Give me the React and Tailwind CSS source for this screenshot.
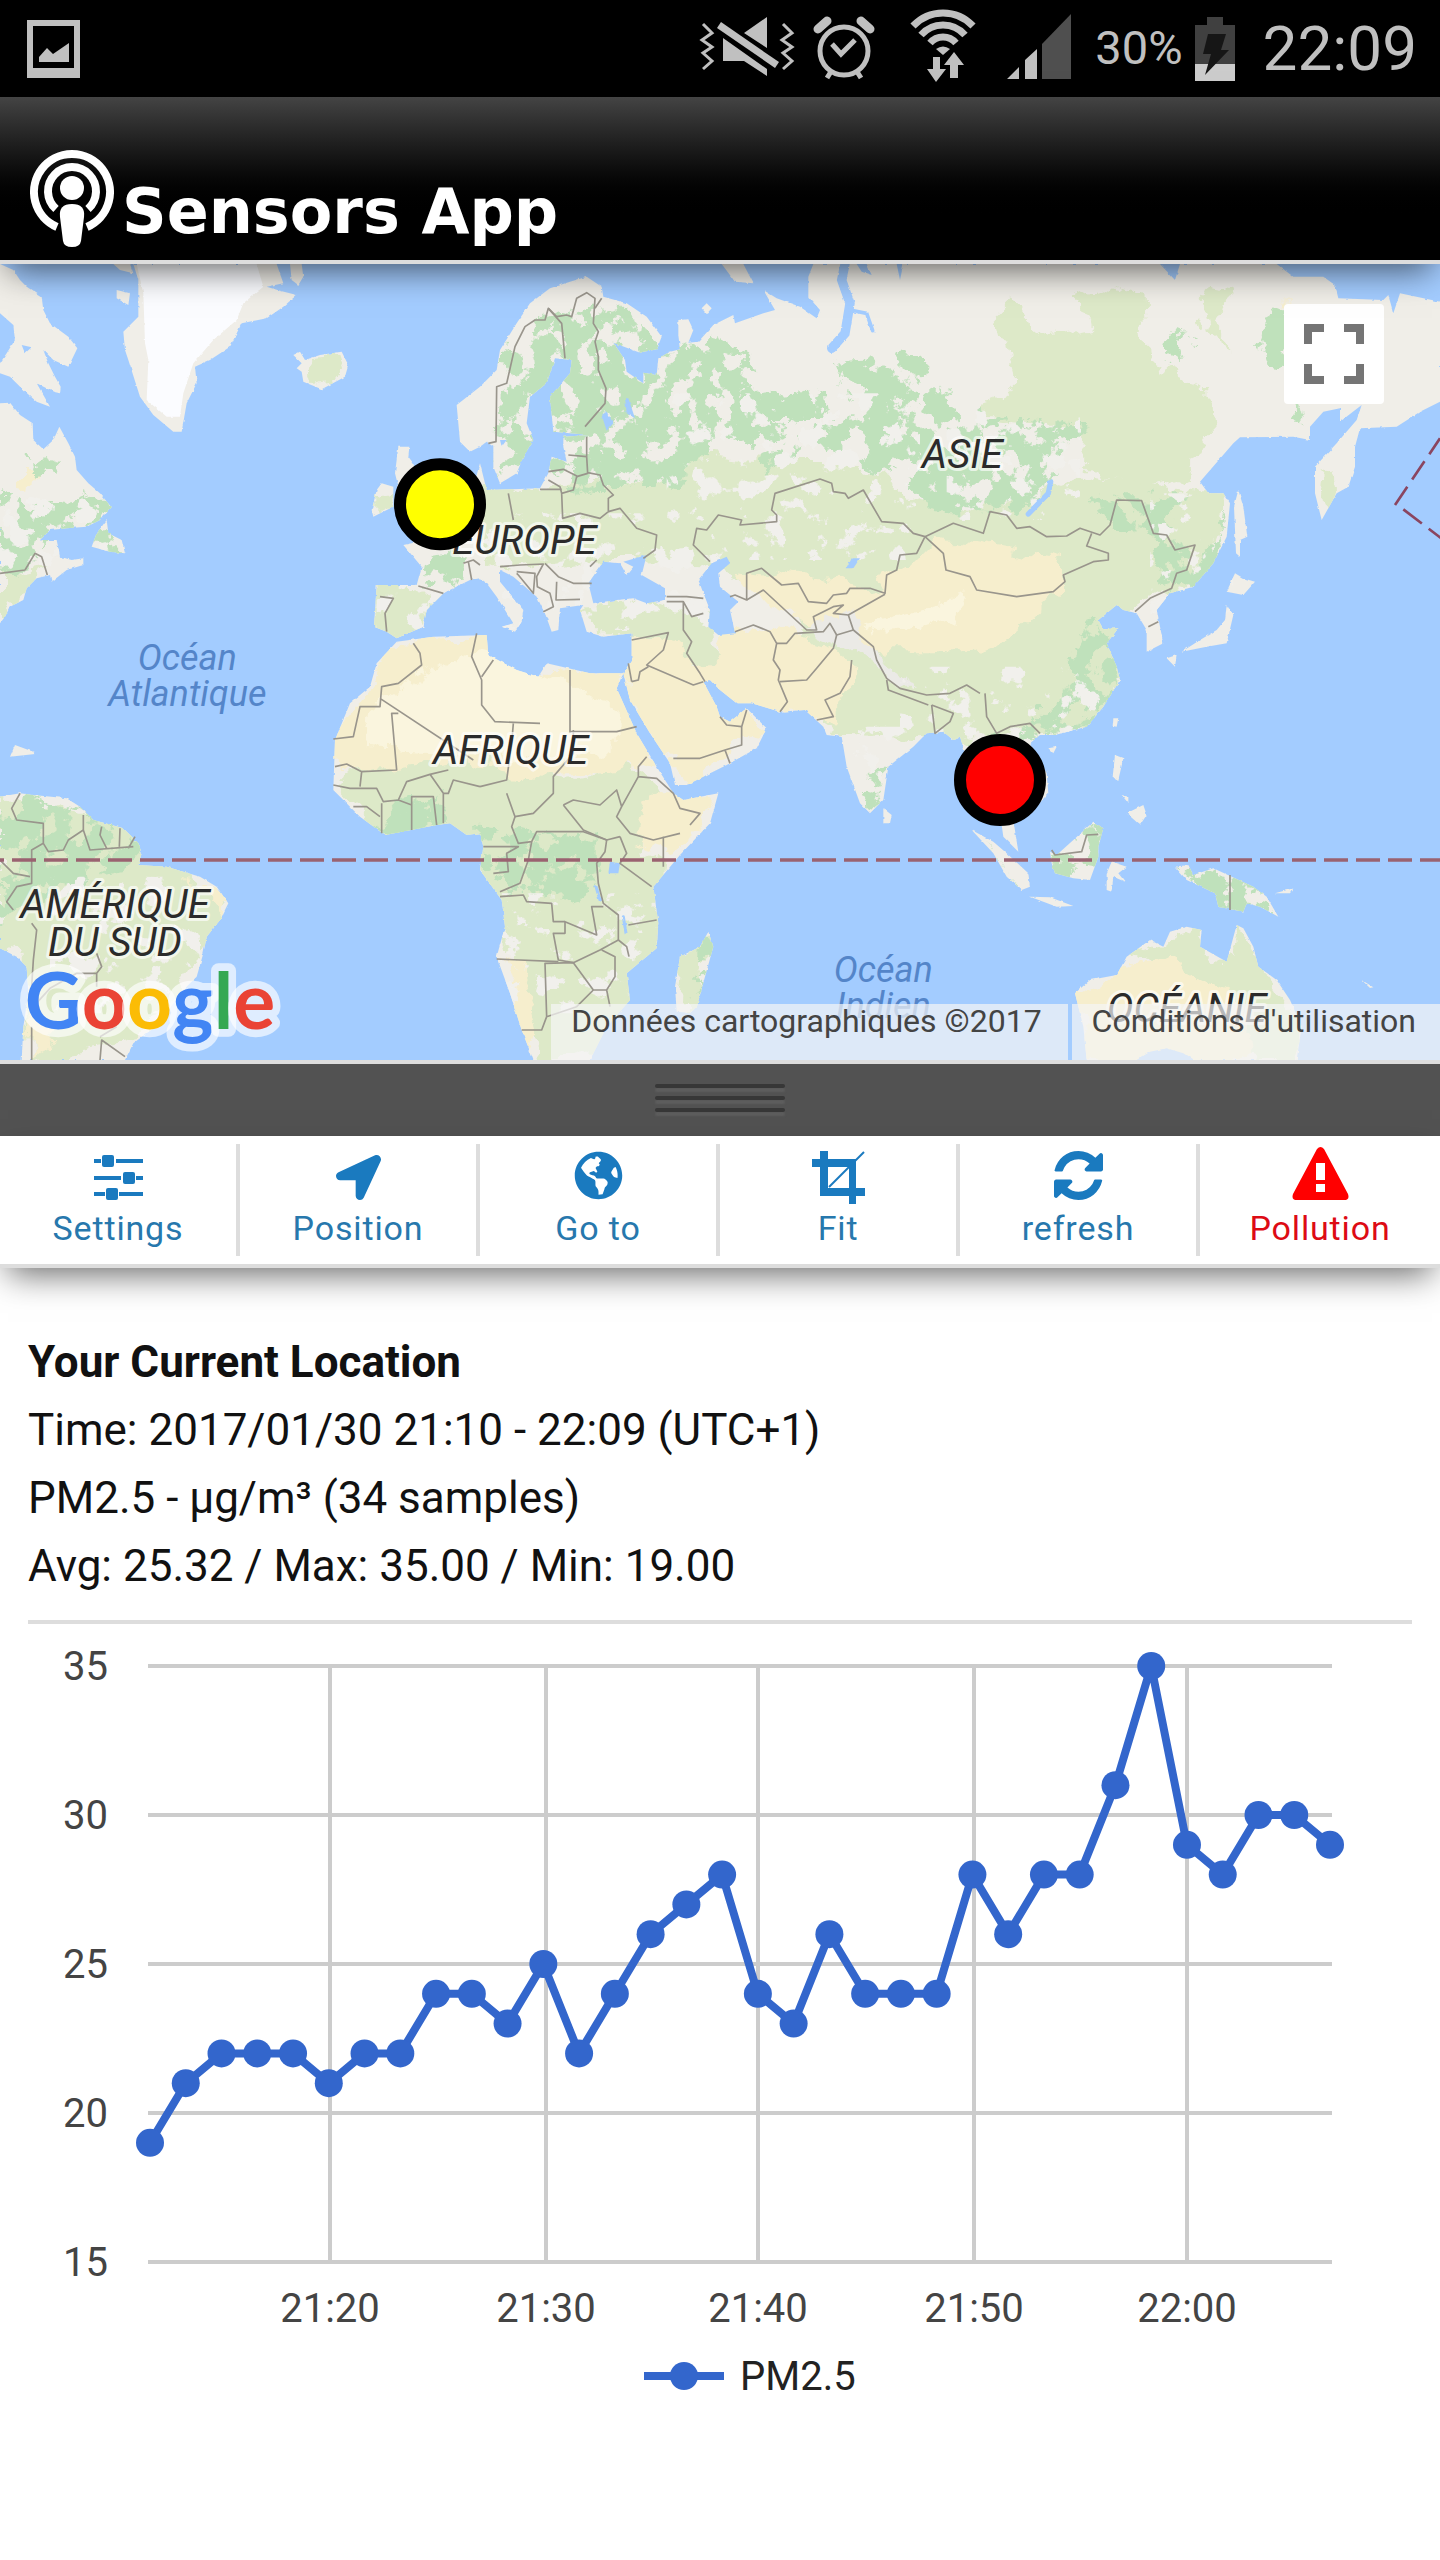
import React from "react";
import { FaLocationArrow, FaGlobeAmericas } from "react-icons/fa";

const WATER = "#a3ccff";

const ISLANDS = [
  "M0,12 40,30 60,60 80,80 125,110 130,150 150,190 205,230 232,265 215,300 205,320 160,300 130,270 145,310 165,350 182,380 180,400 160,395 110,370 150,440 110,425 70,390 30,350 0,340Z",
  "M0,430 30,428 60,465 98,490 100,540 130,568 160,540 178,500 205,550 225,590 230,630 265,670 300,700 333,740 300,780 260,800 200,805 150,810 120,840 170,840 180,890 215,900 250,895 250,915 200,930 155,965 150,945 110,955 80,985 70,1020 30,1040 15,1070 0,1090Z",
  "M320,780 325,820 365,840 375,880 330,875 275,860 290,820Z",
  "M400,12 415,60 415,170 370,215 375,270 385,300 420,410 460,465 520,515 545,515 560,430 590,370 585,320 630,300 690,260 725,190 800,175 850,140 890,105 840,92 800,80 850,70 830,12Z",
  "M350,90 390,100 385,135 350,115Z",
  "M870,12 905,12 910,50 895,75 875,60Z",
  "M340,12 390,12 400,40 360,30Z",
  "M905,310 880,285 900,275 915,300 960,285 1025,275 1045,315 1035,350 965,388 910,365 905,335 890,325Z",
  "M1195,560 1228,560 1225,590 1240,610 1260,700 1250,780 1190,760 1195,680 1185,640Z",
  "M1145,670 1180,680 1180,740 1120,770 1115,750 1130,690Z",
  "M2165,12 2230,12 2260,70 2205,65Z",
  "M2105,145 2120,130 2135,145 2120,162Z",
  "M2125,2015 2140,2060 2090,2240 2070,2260 2030,2255 2025,2180 2040,2090 2100,2060Z",
  "M0,1610 60,1600 100,1605 200,1615 240,1640 280,1680 370,1705 415,1750 425,1780 415,1815 500,1820 600,1850 650,1880 685,1930 660,1980 620,2030 610,2080 590,2150 540,2200 480,2290 400,2350 375,2400 65,2400 70,2300 85,2200 80,2120 50,2090 0,2065Z",
  "M30,1490 45,1455 100,1475 105,1482Z",
  "M2650,1645 2675,1665 2670,1690 2650,1690Z",
  "M2915,1710 2980,1745 3020,1780 3085,1840 3090,1880 3065,1890 3020,1850 2980,1780Z",
  "M3090,1910 3150,1912 3220,1938 3170,1940Z",
  "M3150,1775 3170,1785 3220,1740 3280,1685 3310,1705 3295,1760 3295,1790 3270,1860 3220,1855 3165,1840 3155,1810Z",
  "M3320,1840 3335,1805 3380,1820 3355,1840 3375,1865 3340,1850 3335,1895 3320,1890Z",
  "M3525,1820 3565,1815 3580,1845 3640,1825 3760,1880 3800,1910 3835,1970 3780,1940 3740,1930 3730,1955 3655,1940 3645,1900 3560,1860Z",
  "M3825,1900 3880,1885 3870,1900Z",
  "M3345,1485 3370,1495 3355,1560 3338,1550Z",
  "M3380,1660 3430,1635 3440,1665 3420,1695Z",
  "M3365,1605 3385,1610 3385,1630Z",
  "M3340,1375 3355,1375 3350,1400 3338,1398Z",
  "M3145,1465 3170,1460 3160,1480Z",
  "M3680,1035 3700,1065 3680,1150 3620,1160 3545,1175 3600,1140 3650,1110 3675,1080Z",
  "M3500,1195 3530,1185 3525,1220Z",
  "M3680,995 3705,940 3730,955 3765,965 3730,1005Z",
  "M3715,690 3730,740 3742,830 3720,840 3720,890 3708,880 3702,740Z",
  "M3225,2200 3270,2160 3350,2145 3380,2090 3450,2040 3490,2060 3510,2015 3560,2000 3605,2010 3600,2060 3680,2105 3710,1995 3730,2005 3760,2060 3775,2120 3830,2160 3870,2220 3905,2300 3890,2400 3260,2400 3250,2300Z",
  "M4085,2160 4120,2182 4110,2184Z",
];

const EURASIA =
  "M1440,380 1490,330 1500,270 1550,190 1590,130 1650,85 1710,65 1760,50 1805,80 1810,110 1880,130 1940,170 1985,230 1970,268 1920,278 1840,248 1875,300 1880,335 1930,370 1930,338 1970,345 1975,295 2010,275 2040,268 2035,225 2035,180 2065,178 2080,210 2065,248 2095,245 2140,195 2200,165 2205,190 2290,160 2325,150 2290,90 2330,115 2400,140 2450,175 2460,150 2425,110 2425,50 2440,12 3480,12 3525,60 3540,12 3830,12 3880,50 3970,50 4005,75 4015,115 4150,120 4165,105 4180,160 4200,100 4320,125 4320,425 4260,455 4190,500 4080,505 4065,560 4065,620 4045,680 4010,700 3965,780 3945,700 3945,620 4010,550 4070,480 4085,435 4020,485 4020,445 3970,455 3930,500 3930,540 3880,530 3720,532 3700,550 3600,665 3625,700 3670,700 3690,730 3680,830 3640,910 3580,980 3510,1000 3470,1050 3490,1150 3440,1175 3440,1110 3410,1060 3370,1050 3350,1035 3295,1080 3310,1108 3355,1105 3320,1150 3350,1220 3360,1260 3310,1340 3260,1400 3165,1425 3120,1425 3090,1450 3140,1540 3145,1600 3100,1650 3040,1680 3055,1775 3010,1730 3000,1660 2920,1560 2880,1430 2860,1440 2830,1415 2780,1420 2740,1460 2665,1520 2650,1620 2610,1660 2580,1630 2540,1520 2525,1430 2480,1425 2470,1400 2415,1350 2340,1355 2255,1330 2210,1330 2160,1290 2130,1260 2110,1265 2150,1340 2160,1370 2190,1385 2240,1345 2300,1405 2270,1465 2180,1515 2060,1575 2025,1575 2010,1510 1950,1420 1890,1320 1870,1240 1895,1200 1895,1120 1810,1130 1760,1115 1740,1050 1750,1035 1680,1045 1675,1110 1655,1115 1635,1060 1610,1010 1540,950 1500,930 1500,965 1570,1050 1565,1085 1545,1115 1505,1100 1540,1090 1490,1010 1460,970 1440,955 1410,960 1380,975 1330,1000 1280,1050 1270,1100 1190,1135 1160,1115 1122,1100 1130,975 1250,975 1265,920 1210,855 1280,840 1300,800 1420,680 1440,610 1460,690 1620,685 1645,640 1655,590 1700,605 1690,560 1690,530 1770,525 1660,515 1650,410 1710,340 1715,300 1665,295 1640,370 1590,410 1580,490 1600,540 1570,590 1550,640 1500,670 1480,620 1480,560 1460,545 1440,560 1410,575 1380,545 1370,435Z";

const AFRICA =
  "M1190,1145 1300,1130 1460,1125 1465,1185 1550,1230 1615,1250 1640,1210 1770,1240 1870,1240 1850,1285 1910,1420 1970,1520 2020,1600 2050,1620 2155,1600 2130,1690 2040,1785 1960,1880 1975,1990 1970,2065 1880,2140 1890,2220 1820,2300 1770,2400 1600,2400 1565,2310 1530,2200 1490,2090 1515,2000 1505,1920 1440,1830 1450,1760 1440,1720 1400,1725 1350,1690 1310,1695 1155,1725 1080,1670 1000,1590 1005,1440 1050,1330 1110,1280 1130,1210Z";

const LAKES = [
  "M0,160 40,195 45,240 20,280 0,310Z",
  "M65,255 95,262 75,280Z",
  "M1765,970 1810,905 1860,910 1880,945 1900,920 1870,905 1940,885 1925,945 1995,985 1995,1020 1940,1030 1900,1015 1850,1020 1780,1030Z",
  "M2135,910 2180,890 2190,910 2155,940 2160,980 2215,1025 2190,1050 2205,1120 2155,1125 2125,1100 2130,1050 2095,960Z",
  "M2540,925 2555,895 2580,895 2560,925Z",
  "M1805,465 1820,455 1840,490 1820,512Z",
  "M1875,415 1885,415 1905,475 1880,460Z",
  "M1500,540 1520,540 1505,560Z",
  "M1830,1805 1860,1810 1855,1840 1825,1840Z",
  "M3410,2400 3450,2375 3500,2365 3550,2380 3580,2400Z",
  "M2570,12 2600,12 2615,45 2585,35Z",
  "M2690,12 2710,12 2700,60Z",
];

const GREEN = [
  "M1480,650 1490,400 1560,290 1640,190 1750,150 1820,140 1900,140 1960,260 2010,285 2100,250 2150,210 2180,250 2250,280 2290,400 2480,390 2490,480 2300,480 2350,580 2310,640 2250,560 2150,520 2100,640 2000,690 1770,690 1690,680 1640,600Z",
  "M2500,300 2760,290 2800,380 2870,420 2930,470 3210,490 3250,500 3200,580 3130,700 3050,760 2800,760 2700,640 2600,620 2440,520 2580,480Z",
  "M1500,300 1640,180 1700,300 1600,420 1500,560Z",
  "M2280,460 2400,540 2340,620 2300,560Z",
  "M2850,700 2900,660 2940,740 2910,770Z",
  "M3260,740 3380,700 3560,700 3500,780 3600,900 3690,760 3620,950 3500,1000 3460,850 3300,770Z",
  "M3080,1400 3150,1330 3330,1150 3370,1260 3260,1400 3120,1430 3100,1600 3000,1560 2900,1440Z",
  "M3200,1180 3280,1080 3340,1150 3320,1240 3240,1280Z",
  "M0,1600 250,1640 400,1740 400,1810 300,1830 200,1900 50,1950 0,2000Z",
  "M1440,1700 1600,1715 1790,1730 1790,1850 1740,1930 1640,1900 1540,1880 1450,1830Z",
  "M0,700 100,740 300,690 330,750 250,800 150,830 60,960 0,930Z",
  "M90,590 180,600 170,660 110,640Z",
  "M3490,260 3530,200 3590,240 3530,320Z",
  "M3770,200 3850,150 3860,330 3800,290Z",
  "M2570,1580 2650,1500 2650,1620 2610,1660Z",
  "M3140,1775 3280,1680 3310,1710 3290,1830 3165,1850Z",
  "M3520,1810 3760,1870 3840,1970 3780,1950 3660,1950Z",
  "M2960,1750 3040,1860 3060,1880 3000,1810Z",
  "M275,870 310,780 380,880Z",
  "M1280,890 1390,880 1380,960 1270,970Z",
  "M1140,1700 1200,1630 1320,1600 1360,1700 1160,1730Z",
  "M2090,2100 2130,2000 2150,2060 2080,2240Z",
  "M3860,410 3940,430 3900,500Z",
  "M3960,200 3990,120 3960,340Z",
];

const LIGHT = [
  "M1440,690 2000,660 2100,580 2300,600 2550,600 2750,700 2950,760 3280,640 3600,700 3690,700 3600,950 3400,1060 3350,1220 3330,1400 2900,1430 2860,1440 2500,1430 2440,1280 2400,1100 2300,980 2160,930 1900,900 1800,900 1440,930Z",
  "M2990,170 3020,140 3100,180 3130,230 3280,200 3230,110 3300,80 3430,110 3440,300 3620,380 3630,520 3560,650 3450,680 3300,640 3150,480 2960,470 3040,350Z",
  "M1120,975 1330,1000 1270,1110 1130,1110Z",
  "M1745,1040 1900,1030 2120,1060 2150,1200 2060,1240 1990,1120 1800,1120Z",
  "M1000,1560 1100,1520 1400,1500 1700,1560 1900,1520 2010,1620 1930,1760 2000,1800 1970,2080 1880,2300 1700,2400 1620,2400 1560,2200 1500,2000 1440,1800 1440,1720 1155,1725Z",
  "M0,1600 400,1700 680,1930 600,2100 400,2350 80,2400 80,2100 0,2060Z",
  "M2040,2090 2140,2020 2090,2250 2030,2250Z",
  "M3380,2080 3600,2000 3620,2090 3700,2100 3720,2000 3770,2100 3900,2300 3880,2400 3760,2400 3600,2150Z",
  "M3590,120 3620,80 3700,100 3640,200 3700,260 3620,230Z",
  "M0,950 130,920 60,1010 0,1060Z",
  "M1120,700 1180,690 1180,740 1120,770Z",
  "M920,300 1000,290 1020,350 940,360Z",
  "M3960,620 4010,640 3980,760 3950,700Z",
];

const SAND = [
  "M1100,1290 1190,1140 1460,1120 1560,1230 1870,1240 1960,1500 1850,1540 1600,1550 1400,1500 1010,1540 1000,1420Z",
  "M1870,1120 2010,1120 2130,1260 2300,1400 2060,1580 1950,1420 1880,1300Z",
  "M2200,1110 2300,1100 2500,1160 2560,1240 2500,1370 2200,1340 2100,1230Z",
  "M2200,920 2300,930 2640,990 2800,830 2960,860 3180,900 3180,1000 3050,1120 2900,1180 2650,1180 2450,1110 2300,1050Z",
  "M2000,1600 2155,1600 2040,1780 1900,1740 1940,1620Z",
  "M1490,2090 1560,2100 1620,2300 1580,2380Z",
  "M3230,2220 3380,2110 3500,2100 3700,2200 3760,2320 3700,2400 3260,2400Z",
  "M540,1850 680,1880 670,1970 620,1900Z",
  "M3860,110 3880,170 3850,180Z",
  "M60,610 100,640 90,700 60,690Z",
  "M90,2180 160,2330 80,2390Z",
];

const BORDERS = [
  "M1465,550 1488,545 1490,380 1520,370 1545,260 1575,200 1605,180 1635,180 1645,145 1685,190 1695,295",
  "M1645,145 1670,170 1700,165 1715,170 1730,115 1760,98 1785,115 1780,190 1795,215 1785,245 1795,290 1795,330 1818,385 1815,430 1755,500",
  "M1785,145 1805,115",
  "M1760,530 1760,590 1705,585 M1760,590 1763,640 1730,650 1720,690 1685,700 1680,680 1645,660 M1645,635 1690,628 1735,650 M1685,700 1688,775 1740,760 1800,775 1825,755 1825,715 1840,705 1810,675 1800,645 1763,638",
  "M1620,688 1685,688 M1525,700 1540,780",
  "M1825,755 1860,745 1910,805 1970,825 1965,870 1930,895",
  "M1635,910 1675,950 1720,970 1775,970 M1670,965 1668,1020 1740,1018 M1550,940 1555,945 1600,1000 1605,940 1550,935 M1500,920 1560,915 1630,912 1610,950 1612,980 1650,1000 1660,1040 1630,1055",
  "M1770,920 1790,900",
  "M2130,905 2080,855 2090,805 2120,810 2155,765 2225,780 2220,795 2330,785 2330,765 2315,750 2325,700 2460,657 2495,670 2500,695 2535,700 2545,715 2590,690 2645,785 2710,790 2740,820 2775,830 2750,880 2700,885 2690,930 2660,945 2655,1000 2610,985 2550,985 2540,1000 2500,1005 2480,1030 2425,1025 2395,970 2345,975 2285,925 2240,940 2240,1020 2205,1005 2190,1010",
  "M2240,1020 2290,990 2420,1110 2450,1110 2440,1070 2500,1040 2530,1035 2500,1060 2545,1065 2655,1003",
  "M2545,1065 2560,1110 2510,1125 2490,1090 2470,1115 2385,1120 2360,1150 2330,1150",
  "M2205,1115 2260,1095 2310,1115 2330,1150 2320,1200 2340,1230 2335,1260 2362,1325 2340,1355",
  "M2510,1125 2500,1165 2450,1225 2420,1260 2340,1265 M2555,1200 2550,1250 2520,1300 2475,1320 2500,1370 2450,1380",
  "M2560,1110 2620,1160 2630,1200 2660,1255 2700,1285 2780,1305 2850,1300 2900,1275 2940,1300 M2660,1260 2665,1290 2785,1335 M2795,1335 2860,1360 2850,1385 2805,1420 2795,1335",
  "M2775,830 2860,790 2950,820 2970,755 3020,765 3050,805 3090,800 3140,830 3200,828 3240,805 3300,825 3330,795 3350,720 3425,722 3460,820 3500,825 3525,870 3585,855 3560,930 3530,940 3515,985 3450,1015 3405,1055",
  "M2775,830 2830,880 2838,930 2910,950 2930,990 3050,1010 3160,995 3195,965 3190,945 3280,905 3325,900 3325,880 3260,858 3275,820",
  "M3445,1100 3475,1085 M2955,1300 2960,1370 2990,1420 3030,1400 3090,1390 3120,1420",
  "M2000,1010 2060,1010 2110,1015 M2000,1025 2050,1025 2075,1070 2110,1060 M2050,1025 2050,1110 2075,1145 2060,1180 2100,1240 2115,1265",
  "M1895,1140 2005,1118 1990,1170 1940,1215 2080,1275 2110,1265 M1895,1265 1915,1260 1920,1235 1945,1220 M1885,1210 1895,1265",
  "M2160,1370 2180,1395 2225,1400 2240,1350 M2225,1400 2225,1455 2175,1470 2100,1495 2020,1495 M2175,1470 2190,1510",
  "M1140,1010 1180,1015 1155,1060 1160,1115 M1255,978 1330,1000 M1390,910 1420,900 1440,915 M1405,905 1415,960",
  "M1240,1150 1260,1180 1265,1215 1195,1270 1145,1280 1140,1340 1080,1340 1060,1430 1000,1437 M1140,1315 1420,1500 M1195,1360 1175,1360 1190,1530 1085,1535 1040,1512 1005,1520 M1085,1535 1080,1580 M1430,1120 1415,1190 1445,1260 1445,1335 1485,1385 1620,1390 M1480,1200 1445,1250",
  "M1710,1230 1710,1415 1780,1415 1850,1415 1910,1400 M1540,1390 1535,1450 1520,1560 1440,1580 M1720,1410 1720,1480 1660,1550 1660,1600 1600,1660 1545,1670 1520,1600",
  "M1000,1575 1050,1585 1130,1585 1150,1625 1195,1620 1235,1635 M1195,1620 1220,1565 1290,1543 1345,1530 M1290,1543 1330,1600 1345,1600 1360,1560 1440,1580 M1235,1710 1235,1610 1300,1610 1310,1695 M1330,1600 1330,1690 M1145,1630 1145,1720 M1060,1640 1100,1640 1140,1670",
  "M1690,1635 1720,1620 1800,1635 1850,1590 1865,1640 1850,1670 1890,1720 1960,1740 2040,1720 M1690,1635 1750,1710 1820,1740 1860,1730 M1970,1555 1915,1550 1865,1640 M1940,1490 1915,1520 1915,1550 1970,1555 2020,1600 2040,1645 2100,1660 2070,1695",
  "M1545,1670 1535,1700 1555,1750 1595,1745 1610,1715 1750,1715 1820,1740 1815,1775 1790,1810 1795,1870 1810,1930 1855,1965 1855,2040 1800,2070 1720,2108 1675,2100 1660,2020 1695,2020 1695,1985 1790,2025 1775,1940 1810,1940",
  "M1595,1745 1585,1800 1560,1870 1500,1895 M1450,1760 1555,1760 1520,1780 1525,1835 1480,1840 M1500,1910 1570,1905 1580,1925 1655,1930 1660,1985 1695,1985 M1490,2097 1675,2105 M1860,1730 1880,1780 1860,1810 1955,1880 M1990,1730 1990,1820 M1885,1995 1970,1980 M1855,2040 1880,2060 1887,2090",
  "M1720,2108 1780,2190 1820,2190 1845,2150 1845,2090 1805,2070 M1780,2190 1730,2240 1640,2270 1625,2310 1565,2310 M1640,2270 1635,2110 1720,2108 M1820,2190 1830,2240",
  "M60,1600 35,1645 50,1680 130,1690 130,1750 145,1775 190,1770 205,1740 250,1710 270,1770 400,1760 M250,1665 250,1710 M305,1700 300,1725 320,1765 M360,1705 358,1760 M405,1730 385,1765 M130,1750 95,1770 95,1870 50,1880 20,1925 40,1950 M0,1800 40,1840 90,1850 M95,1990 110,2010 100,2100 95,2180 M290,2080 305,2120 290,2140 290,2180 M100,2240 150,2185 230,2140 290,2140 M95,2300 95,2400 M300,2400 305,2340 375,2390 M300,2330 350,2300",
  "M0,940 75,930 105,880 125,890 142,945",
  "M3155,1770 3165,1785 3245,1775 3260,1725 3295,1723 M3690,1845 3690,1950",
];

const blobs = (list) => list.map((d) => <path key={d} d={d} />);

function MapLabel({ x, y, children }) {
  return (
    <text
      x={x}
      y={y}
      textAnchor="middle"
      fontSize="120"
      fill="#2b2b2b"
      stroke="#ffffff"
      strokeOpacity="0.65"
      strokeWidth="18"
      strokeLinejoin="round"
      paintOrder="stroke"
    >
      {children}
    </text>
  );
}

function WorldMap() {
  return (
    <svg
      viewBox="0 12 4320 2388"
      preserveAspectRatio="xMidYMid slice"
      className="block h-full w-full font-['Roboto',sans-serif] italic"
      role="img"
      aria-label="World map"
    >
      <defs>
        <clipPath id="land">
          {blobs(ISLANDS)}
          <path d={EURASIA} />
          <path d={AFRICA} />
        </clipPath>
        <filter id="coast" x="0" y="0" width="100%" height="100%">
          <feTurbulence type="fractalNoise" baseFrequency="0.06" numOctaves="2" seed="4" result="n" />
          <feDisplacementMap in="SourceGraphic" in2="n" scale="8" xChannelSelector="R" yChannelSelector="G" />
        </filter>
        <filter id="patchy" x="0" y="0" width="100%" height="100%" colorInterpolationFilters="sRGB">
          <feTurbulence type="fractalNoise" baseFrequency="0.015" numOctaves="5" seed="11" result="n" />
          <feDisplacementMap in="SourceGraphic" in2="n" scale="90" xChannelSelector="R" yChannelSelector="G" result="d" />
          <feColorMatrix in="n" type="matrix" values="0 0 0 0 0  0 0 0 0 0  0 0 0 0 0  0 0 -30 0 17.4" result="holes" />
          <feComposite in="d" in2="holes" operator="in" />
        </filter>
        <filter id="clearings" x="0" y="0" width="100%" height="100%" colorInterpolationFilters="sRGB">
          <feTurbulence type="fractalNoise" baseFrequency="0.014" numOctaves="5" seed="37" result="n" />
          <feColorMatrix in="n" type="matrix" values="0 0 0 0 0  0 0 0 0 0  0 0 0 0 0  0 24 0 0 -14.2" result="spots" />
          <feComposite in="SourceGraphic" in2="spots" operator="in" />
        </filter>
        <filter id="soft" x="0" y="0" width="100%" height="100%" colorInterpolationFilters="sRGB">
          <feTurbulence type="fractalNoise" baseFrequency="0.012" numOctaves="4" seed="23" result="n" />
          <feDisplacementMap in="SourceGraphic" in2="n" scale="90" xChannelSelector="R" yChannelSelector="G" result="d" />
          <feGaussianBlur in="d" stdDeviation="2" />
        </filter>
      </defs>
      <rect x="0" y="0" width="4320" height="2400" fill={WATER} />
      <g filter="url(#coast)">
        <g clipPath="url(#land)">
          <rect x="0" y="0" width="4320" height="2400" fill="#f0eee8" />
          <g filter="url(#soft)">
            <g fill="#dde9c8">{blobs(LIGHT)}</g>
            <g fill="#f6eecd">{blobs(SAND)}</g>
            <path d="M1150,1300 1400,1180 1700,1260 1850,1350 1850,1480 1500,1490 1100,1470Z" fill="#faf5de" />
            <path d="M2600,1080 2900,1000 2860,1080 2680,1130Z" fill="#faf5de" />
            <path d="M2420,1110 2480,1060 2580,1080 2640,1200 2760,1280 2700,1280 2620,1220 2540,1160Z" fill="#ebeae6" />
          </g>
          <g fill="#bfe1bb" filter="url(#patchy)">{blobs(GREEN)}</g>
          <g fill="#f1f0ec" filter="url(#clearings)">
            <path d="M0,700H333V960H0Z M1440,760H2160V1110H1440Z M2000,400H2760V900H2000Z M2840,450H3240V780H2840Z M3450,700H3700V1060H3450Z M2700,1220H3300V1440H2700Z M2480,1400H2780V1560H2480Z M150,1850H600V2260H150Z M1450,1900H1960V2260H1450Z M1130,960H1340V1120H1130Z" />
          </g>
          <path
            d="M410,12 430,100 435,250 445,300 440,420 500,470 540,470 550,400 580,310 640,240 710,180 730,130 790,80 770,12Z"
            fill="#fbfcff"
          />
        </g>
        <g fill={WATER}>{blobs(LAKES)}</g>
        <g fill="none" stroke={WATER} strokeLinecap="round">
          <path d="M2535,12 2525,60 2550,130 2535,220 2495,265" strokeWidth="28" />
          <path d="M2550,150 2600,160 2618,212" strokeWidth="11" />
          <path d="M3152,665 3145,700 3085,762" strokeWidth="16" />
          <path d="M1788,1880 1800,1920 M1870,1970 1878,2020" strokeWidth="9" />
        </g>
      </g>
      <g fill="none" stroke="#99958c" strokeWidth="5" strokeLinejoin="round">
        {blobs(BORDERS)}
      </g>
      <path d="M-60,1800H4320" stroke="#9a6270" strokeWidth="11" strokeDasharray="72 24" fill="none" />
      <path d="M4185,735 4320,535" stroke="#8a4560" strokeWidth="8" strokeDasharray="66 26" fill="none" />
      <path d="M4210,748 4330,840" stroke="#8a4560" strokeWidth="8" strokeDasharray="70 26" fill="none" />
      <MapLabel x={2887} y={624}>ASIE</MapLabel>
      <MapLabel x={1573} y={881}>EUROPE</MapLabel>
      <MapLabel x={1532} y={1511}>AFRIQUE</MapLabel>
      <MapLabel x={345} y={1973}>AMÉRIQUE</MapLabel>
      <MapLabel x={345} y={2087}>DU SUD</MapLabel>
      <MapLabel x={3560} y={2285}>OCÉANIE</MapLabel>
      <g fontSize="108" fill="#5485c9" textAnchor="middle">
        <text x="562" y="1229">Océan</text>
        <text x="562" y="1338">Atlantique</text>
        <text x="2650" y="2166">Océan</text>
        <text x="2650" y="2274">Indien</text>
      </g>
      <g stroke="#000000" strokeWidth="36">
        <circle cx="1320" cy="733" r="120" fill="#ffff00" />
        <circle cx="3000" cy="1560" r="120" fill="#ff0000" />
      </g>
      <text
        x="74"
        y="2306"
        fontSize="236"
        fontStyle="normal"
        fontWeight="700"
        className="font-['Lato',sans-serif]"
        stroke="#ffffff"
        strokeOpacity="0.65"
        strokeWidth="46"
        strokeLinejoin="round"
        paintOrder="stroke"
      >
        <tspan fill="#4285f4">G</tspan>
        <tspan fill="#ea4335">o</tspan>
        <tspan fill="#fbbc05">o</tspan>
        <tspan fill="#4285f4">g</tspan>
        <tspan fill="#34a853">l</tspan>
        <tspan fill="#ea4335">e</tspan>
      </text>
    </svg>
  );
}

function StatusIcons() {
  return (
    <svg viewBox="20 0 376 97" className="h-[97px] w-[376px] shrink-0" fill="none" aria-hidden="true">
      <g stroke="#c0c0c0">
        <path d="M24,24 33,33 23,40 33,47 24,53 33,61 24,69" strokeWidth="3" />
        <path d="M104,24 113,33 103,40 113,47 104,53 113,61 104,69" strokeWidth="3" />
        <path d="M40,25 98,65" strokeWidth="7" />
        <circle cx="165" cy="51" r="24" strokeWidth="5" />
        <path d="M139,29 148,21 M191,29 182,21" strokeWidth="9" strokeLinecap="round" />
        <path d="M153,44 162,54 176,40" strokeWidth="5" />
        <path d="M153,70 148,78 M177,70 182,78" strokeWidth="5" />
        <path d="M234,26 A41,41 0 0 1 294,26 M242,35 A29,29 0 0 1 286,35 M251,43 A17,17 0 0 1 277,43" strokeWidth="7" />
      </g>
      <g fill="#c0c0c0">
        <path d="M88,17 65,33 88,48Z M44,38 44,61 65,61 88,76 88,69Z" />
        <path d="M264,55 257,49 Q264,44 271,49Z" />
        <path d="M254,57H261V69H267L257,82 248,69H254Z M271,78V65H265L275,52 285,65H279V78Z" />
        <path d="M328,79 340,67V79Z M346,60 358,49V79H346Z" />
      </g>
      <path d="M363,44 392,14V79H363Z" fill="#4f4f4f" />
    </svg>
  );
}

function StatusBar() {
  return (
    <div className="flex h-[97px] items-center justify-between bg-black pr-[23px] pl-[27px] text-[#c0c0c0]">
      <svg viewBox="0 0 53 58" className="h-[58px] w-[53px]" aria-hidden="true">
        <path fillRule="evenodd" fill="#c0c0c0" d="M0,0H53V58H0Z M6,6V48H47V6Z" />
        <path fill="#c0c0c0" d="M12,42V37L20,28 26,34 42,23V42Z" />
      </svg>
      <div className="flex items-center">
        <StatusIcons />
        <span className="ml-5 text-[47px]">30%</span>
        <svg viewBox="0 0 40 64" className="ml-[12px] h-16 w-10" aria-hidden="true">
          <path d="M12,0H28V8H40V47H0V8H12Z" fill="#404040" />
          <path d="M0,47H40V64H0Z" fill="#cccccc" />
          <path d="M13,17H31L26,33H34L10,58 16,37H8Z" fill="#161616" />
        </svg>
        <span className="ml-7 text-[62px]">22:09</span>
      </div>
    </div>
  );
}

function Header() {
  return (
    <header className="relative z-10 flex h-[167px] items-end gap-2 border-b-4 border-[#dddddd] bg-linear-to-b from-[#444444] to-black to-75% pb-3 pl-[30px] text-white shadow-[0_14px_32px_-8px_rgba(0,0,0,0.6)]">
      <svg viewBox="30 149 84 101" className="h-[101px] w-[84px]" fill="none" stroke="#ffffff" aria-hidden="true">
        <path d="M57,229 A38,38 0 1 1 87,229" strokeWidth="8" />
        <path d="M56,211 A24,24 0 1 1 88,211" strokeWidth="8" />
        <circle cx="72" cy="190" r="12" fill="#ffffff" stroke="none" />
        <path d="M72,206C81,206 85,210 84,219L81,243Q80,249 72,249 64,249 63,243L60,219C59,210 63,206 72,206Z" fill="#ffffff" stroke="none" />
      </svg>
      <h1 className="font-['DejaVu_Sans',sans-serif] text-[62px] leading-[72px] font-bold">Sensors App</h1>
    </header>
  );
}

const SlidersIcon = () => (
  <svg viewBox="0 0 49 45" className="h-[45px] w-[49px]" fill="currentColor" aria-hidden="true">
    <path d="M0,4H7V8H0Z M22,4H49V8H22Z M0,21H27V25H0Z M42,21H49V25H42Z M0,37H11V41H0Z M25,37H49V41H25Z" />
    <rect x="8" y="0" width="12" height="12" rx="2" />
    <rect x="29" y="17" width="12" height="12" rx="2" />
    <rect x="12" y="33" width="12" height="12" rx="2" />
  </svg>
);

const CropIcon = () => (
  <svg viewBox="0 0 53 53" className="-mb-1 h-[53px] w-[53px]" fill="currentColor" aria-hidden="true">
    <path fillRule="evenodd" d="M8,0H16V8H44V37H53V45H44V53H37V45H8V16H0V8H8Z M16,16V37H37V16Z" />
    <path d="M17,36 52,1" stroke="currentColor" strokeWidth="2" />
  </svg>
);

const RefreshIcon = () => (
  <svg viewBox="0 128 1536 1536" className="h-[49px] w-[49px]" fill="currentColor" aria-hidden="true">
    <path d="M1511 1056q0 5-1 7-64 268-268 434.5t-478 166.5q-146 0-282.5-55t-243.5-157l-129 129q-19 19-45 19t-45-19-19-45v-448q0-26 19-45t45-19h448q26 0 45 19t19 45-19 45l-137 137q71 66 161 102t187 36q134 0 250-65t186-179q11-17 53-117 8-23 30-23h192q13 0 22.5 9.5t9.5 22.5zm25-800v448q0 26-19 45t-45 19h-448q-26 0-45-19t-19-45 19-45l138-138q-148-137-349-137-134 0-250 65t-186 179q-11 17-53 117-8 23-30 23h-199q-13 0-22.5-9.5t-9.5-22.5v-7q65-268 270-434.5t480-166.5q146 0 284 55.5t245 156.5l130-129q19-19 45-19t45 19 19 45z" />
  </svg>
);

const WarningIcon = () => (
  <svg viewBox="0 0 57 53" className="h-[53px] w-[57px]" fill="currentColor" aria-hidden="true">
    <path fillRule="evenodd" d="M25,2Q28.500,-2 32,2L56,47Q58,53 52,53H5Q-1,53 1,47Z M24,16V33H33V16Z M24,37V45H33V37Z" />
  </svg>
);

const TOOLS = [
  { label: "Settings", icon: <SlidersIcon /> },
  { label: "Position", icon: <FaLocationArrow className="size-[45px]" aria-hidden="true" /> },
  { label: "Go to", icon: <FaGlobeAmericas className="size-[49px]" aria-hidden="true" /> },
  { label: "Fit", icon: <CropIcon /> },
  { label: "refresh", icon: <RefreshIcon /> },
  { label: "Pollution", icon: <WarningIcon />, alert: true },
];

function Toolbar() {
  return (
    <nav className="relative z-10 grid grid-cols-6 border-b-4 border-[#dddddd] bg-white py-2 shadow-[0_14px_32px_-8px_rgba(0,0,0,0.6)]">
      {TOOLS.map((t) => (
        <button
          key={t.label}
          type="button"
          className={
            "flex h-28 flex-col items-center border-r-4 border-[#dddddd] last:border-r-0 " +
            (t.alert ? "text-[#ff0000]" : "text-[#1a7abf]")
          }
        >
          <span className="flex h-14 items-end justify-center">{t.icon}</span>
          <span className={"mt-2 text-[34px] leading-10 tracking-wide " + (t.alert ? "text-[#dd0b14]" : "text-[#2778ad]")}>
            {t.label}
          </span>
        </button>
      ))}
    </nav>
  );
}

const VALUES = [
  19, 21, 22, 22, 22, 21, 22, 22, 24, 24, 23, 25, 22, 24, 26, 27, 28, 24, 23, 26, 24, 24, 24, 28, 26, 28, 28, 31, 35, 29,
  28, 30, 30, 29,
];
const TICKS = [
  ["21:20", 330],
  ["21:30", 546],
  ["21:40", 758],
  ["21:50", 974],
  ["22:00", 1187],
];
const px = (i) => 150 + (i * 1180) / 33;
const py = (v) => 638 - (v - 15) * 29.8;

function Chart() {
  return (
    <svg viewBox="0 0 1440 800" className="block w-full" fontSize="40" role="img" aria-label="PM2.5 over time">
      <g stroke="#cccccc" strokeWidth="4">
        {[15, 20, 25, 30, 35].map((v) => (
          <path key={v} d={`M148,${py(v)}H1332`} />
        ))}
        {TICKS.map(([t, x]) => (
          <path key={t} d={`M${x},42V638`} />
        ))}
      </g>
      <g fill="#444444">
        {[15, 20, 25, 30, 35].map((v) => (
          <text key={v} x="108" y={py(v) + 14} textAnchor="end">
            {v}
          </text>
        ))}
        {TICKS.map(([t, x]) => (
          <text key={t} x={x} y="698" textAnchor="middle">
            {t}
          </text>
        ))}
      </g>
      <g fill="#3366cc">
        <polyline
          points={VALUES.map((v, i) => `${px(i)},${py(v)}`).join(" ")}
          fill="none"
          stroke="#3366cc"
          strokeWidth="8"
          strokeLinejoin="round"
        />
        {VALUES.map((v, i) => (
          <circle key={i} cx={px(i)} cy={py(v)} r="14" />
        ))}
        <path d="M644,752H724" stroke="#3366cc" strokeWidth="8" />
        <circle cx="684" cy="752" r="14" />
      </g>
      <text x="740" y="766" fill="#222222">
        PM2.5
      </text>
    </svg>
  );
}

export default function App() {
  return (
    <div className="min-h-screen bg-white font-['Roboto',sans-serif]">
      <StatusBar />
      <Header />
      <section className="relative h-[800px] border-b-4 border-[#dddddd]">
        <WorldMap />
        <button
          type="button"
          aria-label="Plein écran"
          className="absolute top-10 right-14 flex size-[100px] items-center justify-center rounded-sm bg-white"
        >
          <svg viewBox="0 0 60 60" className="size-[60px]" fill="none" stroke="#757575" strokeWidth="8" aria-hidden="true">
            <path d="M4,20V4H20 M40,4H56V20 M56,40V56H40 M20,56H4V40" />
          </svg>
        </button>
        <div className="absolute right-0 bottom-0 flex h-14 gap-1 text-[32px] leading-[34px] text-[#444444]">
          <span className="bg-[#f5f5f5]/70 pr-[26px] pl-5">Données cartographiques ©2017</span>
          <a href="#terms" className="bg-[#f5f5f5]/70 pr-6 pl-5">
            Conditions d'utilisation
          </a>
        </div>
      </section>
      <div className="flex h-[72px] flex-col items-center gap-2 bg-[#525252] pt-5">
        {[0, 1, 2].map((i) => (
          <div key={i} className="h-1 w-[130px] rounded-sm bg-[#373737] shadow-[0_4px_2px_#5e5e5e]" />
        ))}
      </div>
      <Toolbar />
      <main>
        <div className="mx-7 border-b-4 border-[#dddddd] pt-[60px] pb-5 text-[44px] leading-[68px] text-[#111111]">
          <h2 className="font-bold">Your Current Location</h2>
          <p>Time: 2017/01/30 21:10 - 22:09 (UTC+1)</p>
          <p>PM2.5 - µg/m³ (34 samples)</p>
          <p>Avg: 25.32 / Max: 35.00 / Min: 19.00</p>
        </div>
        <Chart />
      </main>
    </div>
  );
}
